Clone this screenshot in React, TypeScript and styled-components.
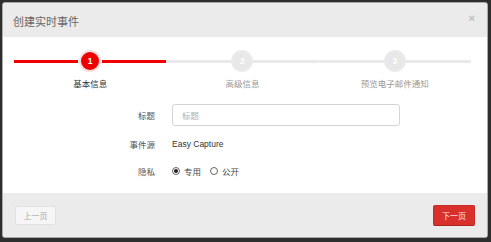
import * as React from "react";
import styled, { createGlobalStyle } from "styled-components";

const GlobalStyle = createGlobalStyle`
  html, body {
    margin: 0;
    padding: 0;
    background: #2e2e2e;
  }
  body {
    font-family: "Liberation Sans", "Noto Sans CJK SC", sans-serif;
  }
  * { box-sizing: border-box; }
`;

const Modal = styled.div`
  width: 486px;
  height: 236px;
  margin: 2px 0 0 2px;
  background: #fff;
  border: 1px solid #a9a9a9;
  border-radius: 3px;
  display: flex;
  flex-direction: column;
  overflow: hidden;
`;

const Header = styled.div`
  height: 34px;
  flex: none;
  background: #ebebeb;
  display: flex;
  align-items: center;
  justify-content: space-between;
  padding: 2px 12px 0 10px;
`;

const Title = styled.h4`
  margin: 0;
  font-family: "Noto Sans CJK SC", sans-serif;
  font-weight: 400;
  font-size: 11px;
  color: #666;
`;

const Close = styled.span`
  align-self: flex-start;
  margin-top: 8px;
  font-size: 11px;
  color: #bbb;
  font-weight: 700;
  line-height: 1;
`;

const Body = styled.div`
  flex: 1;
  padding: 12px 16px 0 11px;
`;

const Steps = styled.div`
  display: grid;
  grid-template-columns: repeat(3, 1fr);
`;

const Step = styled.div`
  display: flex;
  flex-direction: column;
  align-items: center;
`;

const Track = styled.div<{ $done: boolean }>`
  align-self: stretch;
  height: 24px;
  display: flex;
  justify-content: center;
  align-items: center;
  background: linear-gradient(${(p) => (p.$done ? "#f00000" : "#e9e9e9")}, ${(p) => (p.$done ? "#f00000" : "#e9e9e9")})
    center / 100% 3px no-repeat;
`;

const Dot = styled.div<{ $active: boolean }>`
  width: 22px;
  height: 22px;
  border-radius: 50%;
  background: ${(p) => (p.$active ? "#ee0000" : "#e8e8e8")};
  border: 2px solid ${(p) => (p.$active ? "#f6dede" : "#ebebeb")};
  box-shadow: ${(p) => (p.$active ? "0 0 0 1px #fff" : "none")};
  color: #fff;
  font-size: 8.5px;
  font-weight: 700;
  display: flex;
  align-items: center;
  justify-content: center;
`;

const StepLabel = styled.div<{ $active: boolean }>`
  margin-top: 5px;
  font-size: 8.5px;
  line-height: 12px;
  color: ${(p) => (p.$active ? "#333" : "#999")};
`;

const Form = styled.div`
  margin-top: 10px;
  display: flex;
  flex-direction: column;
`;

const Row = styled.div<{ $h: number }>`
  display: flex;
  align-items: center;
  height: ${(p) => p.$h}px;
`;

const Label = styled.div`
  width: 141px;
  margin-right: 17px;
  text-align: right;
  font-size: 8.5px;
  color: #555;
`;

const Input = styled.input`
  width: 228px;
  height: 22px;
  border: 1px solid #d4d4d4;
  border-radius: 3px;
  padding: 0 9px;
  font-family: "Noto Sans CJK SC", sans-serif;
  font-size: 8.5px;
  color: #333;
  outline: none;
  &::placeholder { color: #b0b0b0; }
`;

const Value = styled.div`
  font-size: 8.5px;
  color: #333;
`;

const Radios = styled.div`
  display: flex;
  align-items: center;
  gap: 9px;
`;

const RadioItem = styled.label`
  display: flex;
  align-items: center;
  gap: 4px;
  font-size: 8.5px;
  color: #444;
`;

const RadioCircle = styled.span<{ $checked: boolean }>`
  width: 8px;
  height: 8px;
  border-radius: 50%;
  border: 1px solid #666;
  display: flex;
  align-items: center;
  justify-content: center;
  &::after {
    content: "";
    width: 4px;
    height: 4px;
    border-radius: 50%;
    background: ${(p) => (p.$checked ? "#222" : "transparent")};
  }
`;

const Footer = styled.div`
  height: 44px;
  flex: none;
  background: #ebebeb;
  display: flex;
  align-items: center;
  justify-content: space-between;
  padding: 0 12px 0 12px;
`;

const Button = styled.button<{ $primary?: boolean }>`
  height: ${(p) => (p.$primary ? "21px" : "19px")};
  width: ${(p) => (p.$primary ? "42px" : "41px")};
  padding: 0;
  border-radius: 2px;
  font-family: "Noto Sans CJK SC", sans-serif;
  font-size: 8px;
  background: ${(p) => (p.$primary ? "#da302b" : "#f6f6f6")};
  color: ${(p) => (p.$primary ? "#fde8e8" : "#aaa")};
  border: 1px solid ${(p) => (p.$primary ? "#c82a26" : "#e2e2e2")};
  border-bottom-color: ${(p) => (p.$primary ? "#a8211d" : "#e2e2e2")};
  margin-top: 1px;
`;

const steps = ["基本信息", "高级信息", "预览电子邮件通知"];

const App = () => {
  return (
    <>
      <GlobalStyle />
      <Modal>
        <Header>
          <Title>创建实时事件</Title>
          <Close>×</Close>
        </Header>
        <Body>
          <Steps>
            {steps.map((s, i) => (
              <Step key={s}>
                <Track $done={i === 0}>
                  <Dot $active={i === 0}>{i + 1}</Dot>
                </Track>
                <StepLabel $active={i === 0}>{s}</StepLabel>
              </Step>
            ))}
          </Steps>
          <Form>
            <Row $h={29}>
              <Label>标题</Label>
              <Input placeholder="标题" />
            </Row>
            <Row $h={29}>
              <Label>事件源</Label>
              <Value>Easy Capture</Value>
            </Row>
            <Row $h={25}>
              <Label>隐私</Label>
              <Radios>
                <RadioItem>
                  <RadioCircle $checked />
                  专用
                </RadioItem>
                <RadioItem>
                  <RadioCircle $checked={false} />
                  公开
                </RadioItem>
              </Radios>
            </Row>
          </Form>
        </Body>
        <Footer>
          <Button>上一页</Button>
          <Button $primary>下一页</Button>
        </Footer>
      </Modal>
    </>
  );
};

export default App;
